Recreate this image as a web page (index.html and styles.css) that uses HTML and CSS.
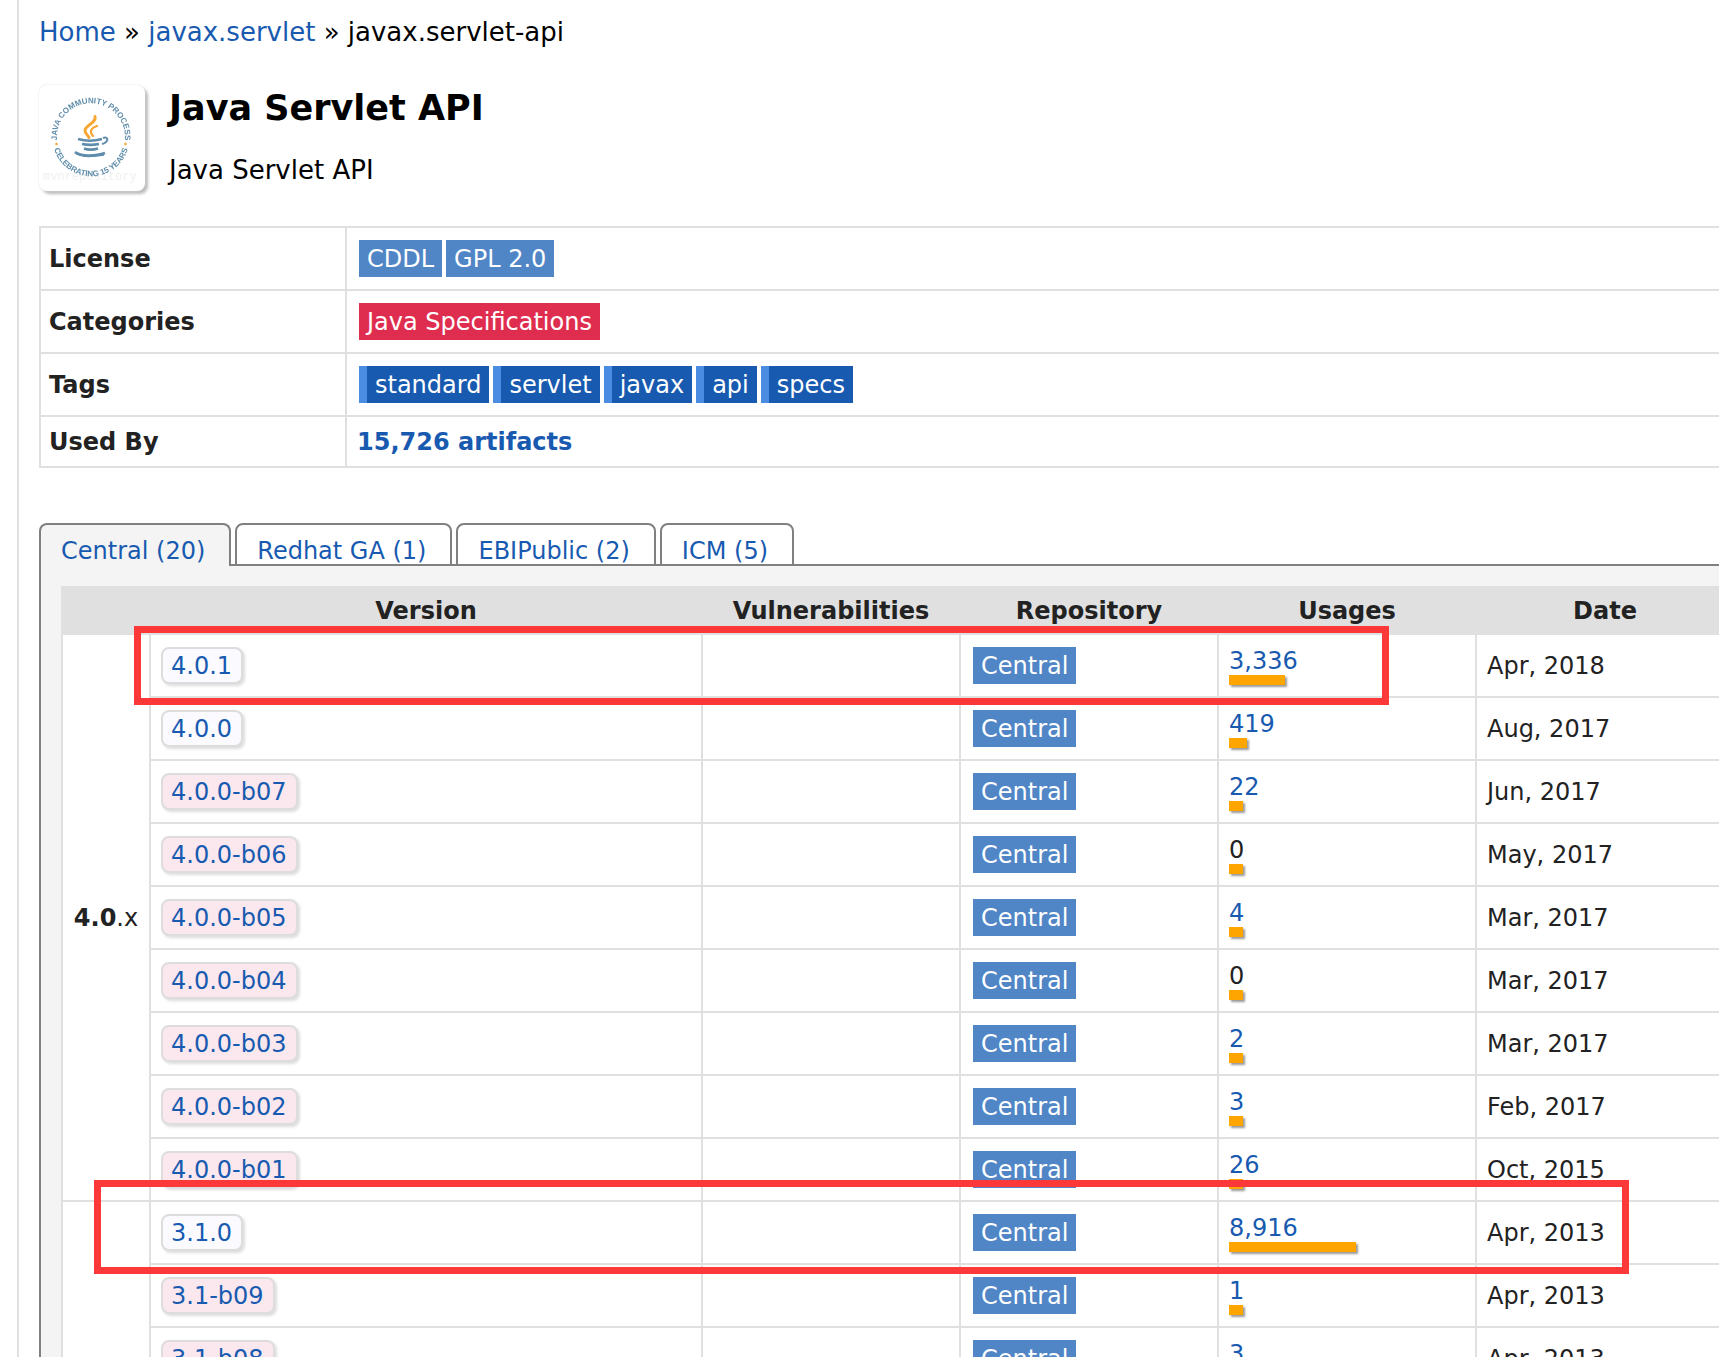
FILE: index.html
```html
<!DOCTYPE html>
<html lang="en">
<head>
<meta charset="utf-8">
<title>Java Servlet API</title>
<link rel="stylesheet" href="styles.css">
</head>
<body>
<main class="page">
  <nav class="breadcrumb" aria-label="Breadcrumb">
    <a href="#">Home</a> » <a href="#">javax.servlet</a> » javax.servlet-api
  </nav>

  <header class="artifact">
    <svg class="logo" viewBox="0 0 106 106" role="img" aria-label="Java Community Process">
      <defs>
        <path id="arc-top" d="M18.500 58a34 34 0 1 1 67 0"/>
        <path id="arc-bottom" d="M14 59a38.500 38.500 0 0 0 76 0"/>
      </defs>
      <text class="watermark" x="4" y="95">mvnrepository</text>
      <g class="emblem">
        <g class="ring">
          <text><textPath href="#arc-top" startOffset="50%" text-anchor="middle">JAVA COMMUNITY PROCESS</textPath></text>
          <text><textPath href="#arc-bottom" startOffset="50%" text-anchor="middle">CELEBRATING 15 YEARS</textPath></text>
        </g>
        <g fill="#f9a733">
          <circle cx="17.500" cy="59" r="1.300"/>
          <circle cx="86.500" cy="59" r="1.300"/>
        </g>
        <g fill="none" stroke="#f9a733" stroke-linecap="round">
          <path stroke-width="3" d="M56 31.500c2 6-10 9-10 14 0 3 3 5 4 7"/>
          <path stroke-width="2.200" d="M58 41c-6 2-8 5-4 10"/>
        </g>
        <g fill="none" stroke="#5f8dab" stroke-width="2.600">
          <path d="M39 54c7 2 17 2 24 0"/>
          <path d="M43 59c5 1 12 1 17 0"/>
          <path d="M45 63.500c4 1.500 9 1.500 14 0"/>
          <path stroke-width="2" d="M64 53c6-2 6 4-1 6"/>
          <path d="M36 67c5 5 22 4 30 1"/>
          <path stroke-width="1.600" d="M44 71c7 1 14 0 21-1"/>
        </g>
      </g>
    </svg>
    <div class="artifact-text">
      <h1>Java Servlet API</h1>
      <p>Java Servlet API</p>
    </div>
  </header>

  <table class="info">
    <tbody>
      <tr><th scope="row">License</th><td><div class="chips"><span class="chip">CDDL</span><span class="chip">GPL 2.0</span></div></td></tr>
      <tr><th scope="row">Categories</th><td><div class="chips"><a class="chip category" href="#">Java Specifications</a></div></td></tr>
      <tr><th scope="row">Tags</th><td><div class="chips"><a class="chip tag" href="#">standard</a><a class="chip tag" href="#">servlet</a><a class="chip tag" href="#">javax</a><a class="chip tag" href="#">api</a><a class="chip tag" href="#">specs</a></div></td></tr>
      <tr><th scope="row">Used By</th><td><a class="used" href="#">15,726 artifacts</a></td></tr>
    </tbody>
  </table>

  <ul class="tabs">
    <li class="tab active"><a href="#">Central (20)</a></li>
    <li class="tab"><a href="#">Redhat GA (1)</a></li>
    <li class="tab"><a href="#">EBIPublic (2)</a></li>
    <li class="tab"><a href="#">ICM (5)</a></li>
  </ul>

  <section class="panel">
    <div class="grid-wrap">
      <table class="versions">
        <colgroup><col class="col-group"><col><col class="col-data"><col class="col-data"><col class="col-data"><col class="col-data"></colgroup>
        <thead>
          <tr><th></th><th scope="col">Version</th><th scope="col">Vulnerabilities</th><th scope="col">Repository</th><th scope="col">Usages</th><th scope="col">Date</th></tr>
        </thead>
        <tbody>
          <tr><td class="group" rowspan="9"><b>4.0</b>.x</td><td><a class="ver" href="#">4.0.1</a></td><td></td><td><div class="chips"><a class="chip" href="#">Central</a></div></td><td><a href="#">3,336</a><div class="bar" style="width:56px"></div></td><td>Apr, 2018</td></tr>
          <tr><td><a class="ver" href="#">4.0.0</a></td><td></td><td><div class="chips"><a class="chip" href="#">Central</a></div></td><td><a href="#">419</a><div class="bar" style="width:18px"></div></td><td>Aug, 2017</td></tr>
          <tr><td><a class="ver beta" href="#">4.0.0-b07</a></td><td></td><td><div class="chips"><a class="chip" href="#">Central</a></div></td><td><a href="#">22</a><div class="bar" style="width:14px"></div></td><td>Jun, 2017</td></tr>
          <tr><td><a class="ver beta" href="#">4.0.0-b06</a></td><td></td><td><div class="chips"><a class="chip" href="#">Central</a></div></td><td>0<div class="bar" style="width:14px"></div></td><td>May, 2017</td></tr>
          <tr><td><a class="ver beta" href="#">4.0.0-b05</a></td><td></td><td><div class="chips"><a class="chip" href="#">Central</a></div></td><td><a href="#">4</a><div class="bar" style="width:14px"></div></td><td>Mar, 2017</td></tr>
          <tr><td><a class="ver beta" href="#">4.0.0-b04</a></td><td></td><td><div class="chips"><a class="chip" href="#">Central</a></div></td><td>0<div class="bar" style="width:14px"></div></td><td>Mar, 2017</td></tr>
          <tr><td><a class="ver beta" href="#">4.0.0-b03</a></td><td></td><td><div class="chips"><a class="chip" href="#">Central</a></div></td><td><a href="#">2</a><div class="bar" style="width:14px"></div></td><td>Mar, 2017</td></tr>
          <tr><td><a class="ver beta" href="#">4.0.0-b02</a></td><td></td><td><div class="chips"><a class="chip" href="#">Central</a></div></td><td><a href="#">3</a><div class="bar" style="width:14px"></div></td><td>Feb, 2017</td></tr>
          <tr><td><a class="ver beta" href="#">4.0.0-b01</a></td><td></td><td><div class="chips"><a class="chip" href="#">Central</a></div></td><td><a href="#">26</a><div class="bar" style="width:14px"></div></td><td>Oct, 2015</td></tr>
        </tbody>
        <tbody>
          <tr><td class="group" rowspan="3"></td><td><a class="ver" href="#">3.1.0</a></td><td></td><td><div class="chips"><a class="chip" href="#">Central</a></div></td><td><a href="#">8,916</a><div class="bar" style="width:127px"></div></td><td>Apr, 2013</td></tr>
          <tr><td><a class="ver beta" href="#">3.1-b09</a></td><td></td><td><div class="chips"><a class="chip" href="#">Central</a></div></td><td><a href="#">1</a><div class="bar" style="width:14px"></div></td><td>Apr, 2013</td></tr>
          <tr><td><a class="ver beta" href="#">3.1-b08</a></td><td></td><td><div class="chips"><a class="chip" href="#">Central</a></div></td><td><a href="#">3</a><div class="bar" style="width:14px"></div></td><td>Apr, 2013</td></tr>
        </tbody>
      </table>
      <div class="mark mark-latest"></div>
      <div class="mark mark-popular"></div>
    </div>
  </section>
</main>
</body>
</html>
```
FILE: styles.css
```css
* { box-sizing: border-box; }

body {
  margin: 0;
  height: 100vh;
  overflow: hidden;
  background: #fff;
  color: #222;
  font: 24px/29px Verdana, "DejaVu Sans", sans-serif;
}

a { color: #185ab0; text-decoration: none; }

/* the content column runs past the right edge of the window */
.page {
  min-height: 100%;
  margin-left: 17px;
  margin-right: -38px;
  padding: 16px 0 0 20px;
  border-left: 2px solid #e0e0e0;
}

.breadcrumb { color: #000; font-size: 26px; line-height: 32px; }

.artifact { display: flex; gap: 24px; margin-top: 37px; color: #000; }
.logo {
  flex: none;
  width: 106px;
  height: 106px;
  border-radius: 8px;
  background: #fff;
  box-shadow: 0 0 2px #ddd, 3px 3px 3px #bbb;
}
.watermark { font: 12px "Liberation Mono", monospace; fill: #f0f0f0; }
.emblem { filter: blur(0.4px); }
.ring { font: bold 8px "Liberation Sans", sans-serif; fill: #5f8dab; }

h1 { margin: 0; font-size: 35px; line-height: 46px; }
.artifact-text p { margin: 23px 0 0; font-size: 26px; line-height: 32px; }

table { width: 100%; border-collapse: collapse; }
th, td { border: 2px solid #e0e0e0; padding: 11px 10px 9px; }

.info { margin-top: 35px; }
.info th { width: 306px; padding-left: 8px; text-align: left; }
.used { font-weight: bold; }

.chips { display: flex; }
.chip { margin: 1px 2px 3px; padding: 5px 8px 3px; background: #5085c6; color: #fff; }
.category { background: #df2d50; }
.tag { background: #185ab0; border-left: 8px solid #4a8ce2; }

.tabs {
  display: flex;
  gap: 4px;
  margin: 55px 0 -2px;
  padding: 0;
  list-style: none;
}
.tab {
  height: 43px;
  padding: 12px 24px 0 20px;
  border: 2px solid #808080;
  border-radius: 8px 8px 0 0;
  overflow: hidden;
  position: relative;
}
.active { border-bottom: 0; background: #f4f4f4; }

.panel { padding: 20px; border: 2px solid #808080; background: #f4f4f4; }
.grid-wrap { position: relative; }
.versions { table-layout: fixed; background: #fff; }
.versions th { padding: 9px 8px 7px; background: #e0e0e0; }
.col-group { width: 88px; }
.col-data { width: 258px; }
.group { text-align: center; }

.ver {
  display: block;
  width: fit-content;
  margin-bottom: 2px;
  padding: 3px 9px 1px 8px;
  border: 2px solid #ddd;
  border-radius: 8px;
  background: #fafaff;
  box-shadow: 2px 2px 3px #ddd;
}
.beta { background: #fae8ee; }

.bar { height: 10px; margin: -1px 0 1px; background: orange; box-shadow: 2px 2px 2px #999; }

/* highlight frames laid over the table */
.mark { position: absolute; border: 7px solid #fc3838; }
.mark-latest { left: 73px; top: 40px; width: 1255px; height: 79px; }
.mark-popular { left: 33px; top: 594px; width: 1535px; height: 94px; }
```
